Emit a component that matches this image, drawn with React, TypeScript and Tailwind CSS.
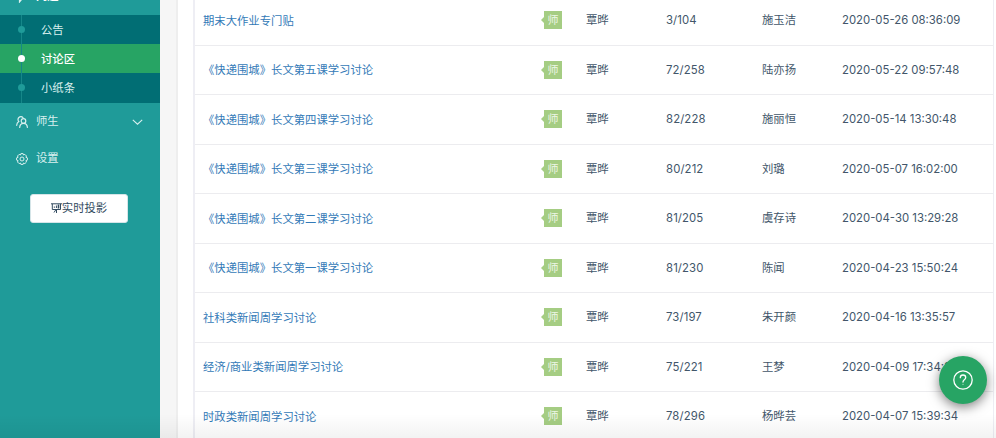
const posts = [
  { title: '期末大作业专门贴', replies: '3/104', last: '施玉洁', time: '2020-05-26 08:36:09' },
  { title: '《快递围城》长文第五课学习讨论', replies: '72/258', last: '陆亦扬', time: '2020-05-22 09:57:48' },
  { title: '《快递围城》长文第四课学习讨论', replies: '82/228', last: '施丽恒', time: '2020-05-14 13:30:48' },
  { title: '《快递围城》长文第三课学习讨论', replies: '80/212', last: '刘璐', time: '2020-05-07 16:02:00' },
  { title: '《快递围城》长文第二课学习讨论', replies: '81/205', last: '虞存诗', time: '2020-04-30 13:29:28' },
  { title: '《快递围城》长文第一课学习讨论', replies: '81/230', last: '陈闻', time: '2020-04-23 15:50:24' },
  { title: '社科类新闻周学习讨论', replies: '73/197', last: '朱开颜', time: '2020-04-16 13:35:57' },
  { title: '经济/商业类新闻周学习讨论', replies: '75/221', last: '王梦', time: '2020-04-09 17:34:26' },
  { title: '时政类新闻周学习讨论', replies: '78/296', last: '杨晔芸', time: '2020-04-07 15:39:34' },
]

const subMenu = [
  { label: '公告', active: false },
  { label: '讨论区', active: true },
  { label: '小纸条', active: false },
]

const UsersIcon = () => (
  <svg width="12" height="12" viewBox="0 0 12 12" fill="none" stroke="currentColor" strokeWidth="1.200" strokeLinecap="round">
    <path d="M7 1.600A2.700 2.700 0 1 0 2.800 5.600C1.500 6.400.8 7.600.7 9.300" />
    <circle cx="7.500" cy="5" r="2.300" />
    <path d="M3.700 11.400c.2-2.400 1.600-4 3.800-4s3.700 1.600 3.900 4" />
  </svg>
)

const GearIcon = () => (
  <svg width="12" height="12" viewBox="0 0 12 12" fill="none" stroke="currentColor" strokeWidth="1" strokeLinejoin="round">
    <path d="M4.900.6h2.200l.4 1.400 1.400-.6 1.600 1.600-.6 1.300 1.500.6v2.200l-1.500.5.6 1.400-1.600 1.600-1.400-.6-.4 1.400H4.900l-.4-1.400-1.400.6L1.500 9l.6-1.400L.6 7.100V4.900l1.500-.6L1.500 3l1.600-1.600 1.400.6Z" />
    <circle cx="6" cy="6" r="2" />
  </svg>
)

const ProjectorIcon = () => (
  <svg width="11" height="10" viewBox="0 0 11 10" fill="none" stroke="currentColor" strokeWidth="1">
    <path d="M0 .8h11M1.300.8v5.700h8.200V.8M5.500 6.500V10M3 9.500l2-3M3.300 4.800V3.500M5.400 5V2.500" />
    <path d="M7.500 5.500v-4" strokeWidth="1.600" />
  </svg>
)

const Sidebar = () => (
  <aside className="w-[160px] h-full shrink-0 bg-[#1f9b99] text-[#d9f0ef] overflow-hidden">
    <div className="h-[15px] flex items-end">
      <div className="h-[37px] w-full flex items-center pl-4 gap-2">
        <svg width="12" height="12" viewBox="0 0 12 12" fill="none" stroke="currentColor" strokeWidth="1.200">
          <path d="M1 1h10v7H6l-2.500 3V8H1z" />
        </svg>
        <span className="font-bold text-white">问题</span>
      </div>
    </div>
    <ul>
      {subMenu.map((item) => (
        <li
          key={item.label}
          className={`relative h-[29.200px] flex items-center pl-[41px] pt-px ${item.active ? 'bg-[#27a464] text-white font-medium' : 'bg-[#016e74]'}`}
        >
          <span className="absolute left-[21px] top-0 bottom-0 w-px bg-[#168789]" />
          <span className={`absolute left-[18px] top-[11px] size-[7px] rounded-full ${item.active ? 'bg-white' : 'bg-[#1f9b99]'}`} />
          {item.label}
        </li>
      ))}
    </ul>
    <div className="h-[37px] flex items-center pl-4 pr-[17px] pt-px">
      <UsersIcon />
      <span className="ml-2 flex-1">师生</span>
      <svg width="11" height="6" viewBox="0 0 11 6" fill="none" stroke="currentColor" strokeWidth="1.100">
        <path d="M.8.8 5.500 5.200 10.200.8" />
      </svg>
    </div>
    <div className="h-[37px] flex items-center pl-4 gap-2 pt-px">
      <GearIcon />
      <span>设置</span>
    </div>
    <button className="ml-[30px] mt-[17px] w-[98px] h-[29px] rounded-[3px] bg-white border border-[#d5e5e8] text-[#334b60] flex items-center justify-center">
      <ProjectorIcon />
      <span className="pt-px">实时投影</span>
    </button>
  </aside>
)

const TeacherBadge = () => (
  <span className="flex items-center">
    <span className="size-0 border-y-[3px] border-y-transparent border-r-[3px] border-r-[#a5cd83]" />
    <span className="w-[18px] h-[18px] bg-[#a5cd83] text-[#edf6e6] text-[11px] leading-[18px] text-center">师</span>
  </span>
)

export default function App() {
  return (
    <div className="relative flex w-full h-[438px] overflow-hidden bg-[#f6f6f6] text-[11.350px] leading-[17px] whitespace-nowrap font-[Inter,'Noto_Sans_CJK_SC',sans-serif]">
      <Sidebar />
      <main className="ml-4 flex-1 border-l-2 border-[#eeeeee] bg-white pl-[15px] pr-[2px]">
        <div className="h-full overflow-hidden border-l-2 border-r border-[#eeeef4]">
          <div className="-mt-[4px]">
            {posts.map((post) => (
              <div
                key={post.time}
                className="grid h-[49.530px] grid-cols-[346px_45px_80px_96px_80px_1fr] items-center border-b-[1.500px] border-[#ececef] text-[#42566a]"
              >
                <a className="pl-2 pt-[1.500px] text-[#337ab7]">{post.title}</a>
                <TeacherBadge />
                <span className="pt-px">覃晔</span>
                <span className="pt-px tracking-[0.010em]">{post.replies}</span>
                <span className="pt-px">{post.last}</span>
                <span className="pt-px">{post.time}</span>
              </div>
            ))}
          </div>
        </div>
      </main>

      {/* bottom fade */}
      <div className="pointer-events-none absolute inset-x-0 bottom-0 h-[24px] bg-linear-to-b from-transparent to-black/5" />

      {/* help */}
      <button className="absolute left-[939px] top-[356px] size-[48px] rounded-full bg-[#27a464] text-white flex items-center justify-center shadow-[0_3px_12px_rgba(0,0,0,0.5)]">
        <svg width="20" height="20" viewBox="0 0 20 20" fill="none" stroke="currentColor" strokeWidth="1.300" strokeLinecap="round">
          <circle cx="10" cy="10" r="9.200" />
          <path d="M7.300 7.700c0-1.700 1.100-2.700 2.700-2.700s2.700 1 2.700 2.500c0 1.300-.8 1.800-1.600 2.400-.8.6-1.100 1-1.100 2.100" />
          <circle cx="10" cy="14.300" r=".5" fill="currentColor" stroke="none" />
        </svg>
      </button>
    </div>
  )
}
